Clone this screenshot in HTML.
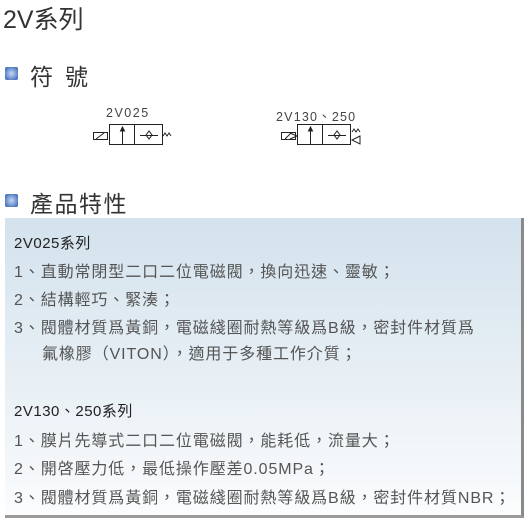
<!DOCTYPE html><html><head><meta charset="utf-8"><style>
body{margin:0;width:529px;height:529px;background:#fff;position:relative;overflow:hidden;font-family:"Liberation Sans","Noto Sans CJK TC",sans-serif;color:#333}
.a{position:absolute;white-space:nowrap}
.sq{position:absolute;width:13px;height:13px;background:radial-gradient(circle,#c8d8f0 0%,#6a8fd0 60%,#2f5aa8 100%);border-radius:2px}
.panel{position:absolute;left:5px;top:218px;width:516px;height:297px;background:linear-gradient(#d3e2ed,#eaf1f6 60%,#fbfcfd);border-right:3px solid #8a8a8a;border-bottom:3px solid #9a9a9a}
.t{position:absolute;left:14px;font-size:16px;color:#555;letter-spacing:0.9px;white-space:nowrap}
</style></head><body>
<div class="a" style="left:3px;top:0px;font-size:25px;color:#333">2V系列</div>
<div class="sq" style="left:5px;top:67px"></div>
<div class="a" style="left:30px;top:58px;font-size:23px;letter-spacing:12px">符號</div>
<div class="a" style="left:106px;top:106px;font-size:12.5px;color:#444;letter-spacing:1.5px">2V025</div>
<div class="a" style="left:276px;top:106px;font-size:12.5px;color:#444;letter-spacing:1.2px">2V130、250</div>
<svg class="a" style="left:0;top:0" width="529" height="160" fill="none" stroke="#222" stroke-width="1">
<rect x="93.5" y="132.5" width="14" height="7"/><line x1="96" y1="139" x2="104" y2="133"/>
<rect x="109.5" y="124.5" width="53" height="20"/><line x1="134.5" y1="125" x2="134.5" y2="144"/>
<line x1="122.5" y1="144" x2="122.5" y2="128"/><path d="M120.5 131 L122.5 127 L124.5 131Z" fill="#222"/>
<line x1="140" y1="135.5" x2="158" y2="135.5"/><path d="M146 135 L149 131 L152 135 L149 139Z"/>
<path d="M163 136 l2 -3 l2 3 l2 -3 l2 3"/>
<rect x="281.5" y="132.5" width="14" height="7"/><line x1="285" y1="139" x2="291" y2="133"/><path d="M290 133 L297 136 L290 139"/>
<rect x="297.5" y="124.5" width="53" height="20"/><line x1="322.5" y1="125" x2="322.5" y2="144"/>
<line x1="310.5" y1="144" x2="310.5" y2="128"/><path d="M308.5 131 L310.5 127 L312.5 131Z" fill="#222"/>
<line x1="328" y1="135.5" x2="346" y2="135.5"/><path d="M334 135 L337 131 L340 135 L337 139Z"/>
<path d="M352 132 l2 -3 l2 3 l2 -3 l2 3"/><path d="M360 136 L352 140 L360 144Z"/>
</svg>
<div class="sq" style="left:5px;top:194px"></div>
<div class="a" style="left:30px;top:185px;font-size:23px;letter-spacing:1.5px">產品特性</div>
<div class="panel"></div>
<div class="t" style="top:232px;color:#222;font-size:15px;letter-spacing:0.5px">2V025系列</div>
<div class="t" style="top:258px">1、直動常閉型二口二位電磁閥，換向迅速、靈敏；</div>
<div class="t" style="top:286px">2、結構輕巧、緊湊；</div>
<div class="t" style="top:314px">3、閥體材質爲黃銅，電磁綫圈耐熱等級爲B級，密封件材質爲</div>
<div class="t" style="top:340px;left:42px">氟橡膠（VITON），適用于多種工作介質；</div>
<div class="t" style="top:400px;color:#222;font-size:15px;letter-spacing:0.5px">2V130、250系列</div>
<div class="t" style="top:427px">1、膜片先導式二口二位電磁閥，能耗低，流量大；</div>
<div class="t" style="top:455px">2、開啓壓力低，最低操作壓差0.05MPa；</div>
<div class="t" style="top:484px">3、閥體材質爲黃銅，電磁綫圈耐熱等級爲B級，密封件材質NBR；</div>
</body></html>
